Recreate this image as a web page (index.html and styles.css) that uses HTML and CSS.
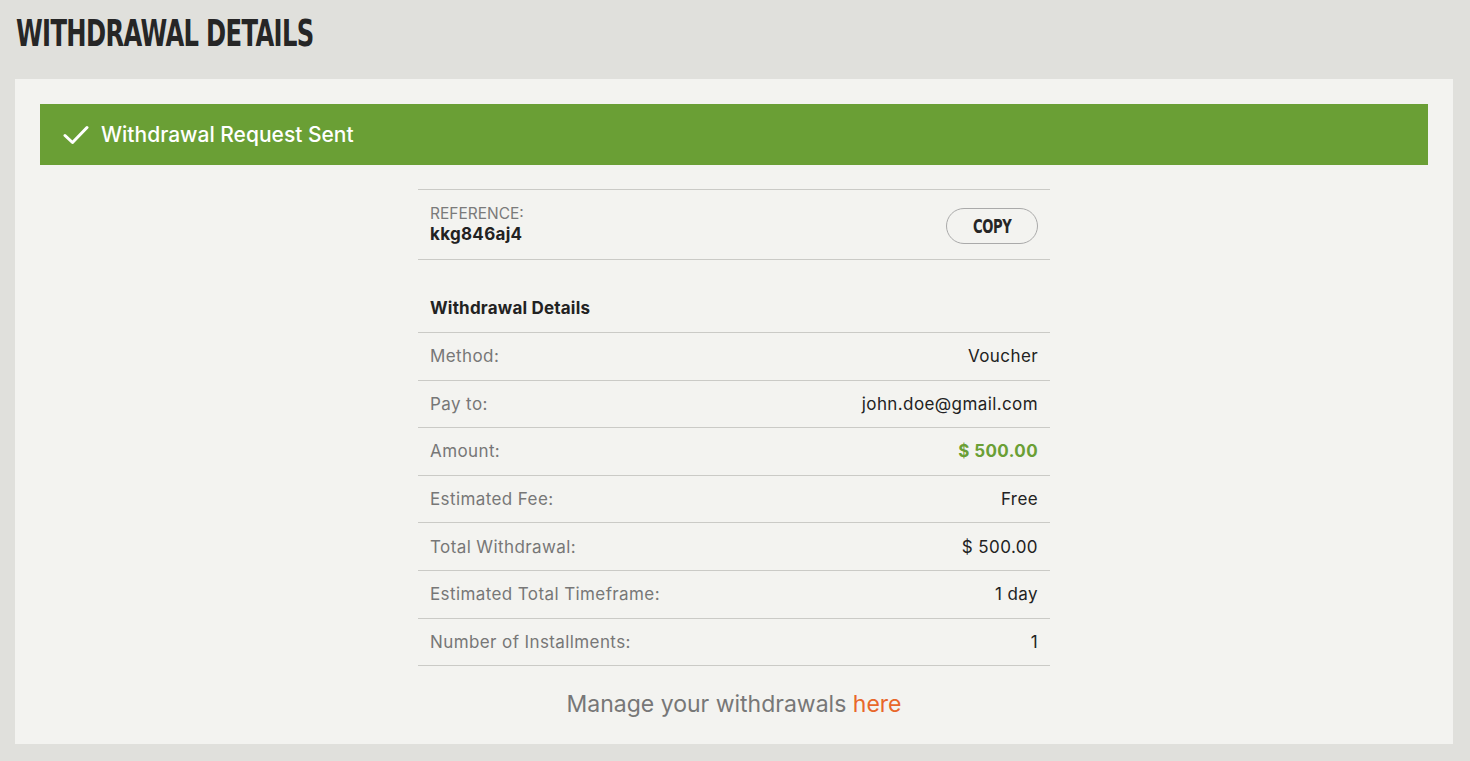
FILE: index.html
```html
<!DOCTYPE html>
<html lang="en">
<head>
    <meta charset="UTF-8">
    <meta name="viewport" content="width=device-width, initial-scale=1.0">
    <title>Withdrawal Details</title>
    <link rel="stylesheet" href="styles.css">
</head>
<body>
    <h1 class="page-title"><span class="narrow">WITHDRAWAL DETAILS</span></h1>
    <div class="card">
        <div class="success-bar">
            <svg class="check" width="26" height="20" viewBox="0 0 26 20">
                <path d="M2 10.5 L9.5 17.5 L24 2.5" fill="none" stroke="#fff" stroke-width="3" stroke-linecap="round" stroke-linejoin="round"/>
            </svg>
            <span>Withdrawal Request Sent</span>
        </div>
        <div class="details">
            <div class="reference">
                <div>
                    <div class="ref-label">REFERENCE:</div>
                    <div class="ref-code">kkg846aj4</div>
                </div>
                <button class="copy-btn"><span class="narrow">COPY</span></button>
            </div>
            <div class="section-title">Withdrawal Details</div>
            <div class="row"><span class="label">Method:</span><span class="value">Voucher</span></div>
            <div class="row"><span class="label">Pay to:</span><span class="value">john.doe@gmail.com</span></div>
            <div class="row"><span class="label">Amount:</span><span class="value amount">$ 500.00</span></div>
            <div class="row"><span class="label">Estimated Fee:</span><span class="value">Free</span></div>
            <div class="row"><span class="label">Total Withdrawal:</span><span class="value">$ 500.00</span></div>
            <div class="row"><span class="label">Estimated Total Timeframe:</span><span class="value">1 day</span></div>
            <div class="row"><span class="label">Number of Installments:</span><span class="value">1</span></div>
            <p class="manage">Manage your withdrawals <a href="#">here</a></p>
        </div>
    </div>
</body>
</html>
```

FILE: styles.css
```css
body {
    margin: 0;
    padding: 0 17px 0 15px;
    background-color: #e0e0dc;
    font-family: Inter, "Noto Sans", Arial, sans-serif;
    color: #222;
}
.narrow {
    display: inline-block;
    transform: scaleX(0.655);
    transform-origin: left center;
}
.page-title {
    margin: 0;
    padding: 14px 0 0 1px;
    height: 79px;
    box-sizing: border-box;
    font-family: "DejaVu Sans", sans-serif;
    font-weight: bold;
    font-size: 37px;
    letter-spacing: -1px;
    color: #262626;
    line-height: 40px;
    white-space: nowrap;
}
.card {
    background-color: #f3f3f0;
    padding: 25px 25px 0 25px;
    height: 665px;
    box-sizing: border-box;
}
.success-bar {
    background-color: #6a9f35;
    height: 61px;
    display: flex;
    align-items: center;
    padding-left: 23px;
    color: #fff;
    font-size: 21px;
    font-weight: 500;
}
.check {
    margin-right: 12px;
}
.details {
    width: 632px;
    margin: 24px auto 0 auto;
}
.reference {
    border-top: 1px solid #cacac6;
    border-bottom: 1px solid #cacac6;
    height: 71px;
    box-sizing: border-box;
    display: flex;
    align-items: center;
    justify-content: space-between;
    padding: 0 12px;
}
.ref-label {
    font-size: 15.5px;
    color: #7a7a7a;
    margin-top: -2px;
}
.ref-code {
    font-size: 17px;
    font-weight: bold;
    letter-spacing: 0.3px;
    color: #222;
    margin-top: 1px;
}
.copy-btn {
    width: 92px;
    height: 36px;
    padding: 0 0 0 26px;
    text-align: left;
    border: 1px solid #aaa;
    border-radius: 18px;
    background: transparent;
    font-family: "DejaVu Sans", sans-serif;
    font-weight: bold;
    font-size: 20px;
    letter-spacing: -0.5px;
    color: #262626;
    margin-top: 2px;
    white-space: nowrap;
}
.section-title {
    height: 73px;
    box-sizing: border-box;
    padding: 38px 12px 0 12px;
    font-size: 17px;
    font-weight: bold;
    letter-spacing: 0.2px;
    border-bottom: 1px solid #cacac6;
}
.row {
    display: flex;
    justify-content: space-between;
    align-items: center;
    height: 47.6px;
    box-sizing: border-box;
    padding: 0 12px;
    border-bottom: 1px solid #cacac6;
    font-size: 17px;
    letter-spacing: 0.4px;
}
.label {
    color: #777;
}
.value {
    color: #222;
}
.amount {
    color: #6a9f35;
    font-weight: bold;
}
.manage {
    text-align: center;
    margin: 24px 0 0 0;
    font-size: 23px;
    color: #777;
}
.manage a {
    color: #e8672a;
    text-decoration: none;
}
```
